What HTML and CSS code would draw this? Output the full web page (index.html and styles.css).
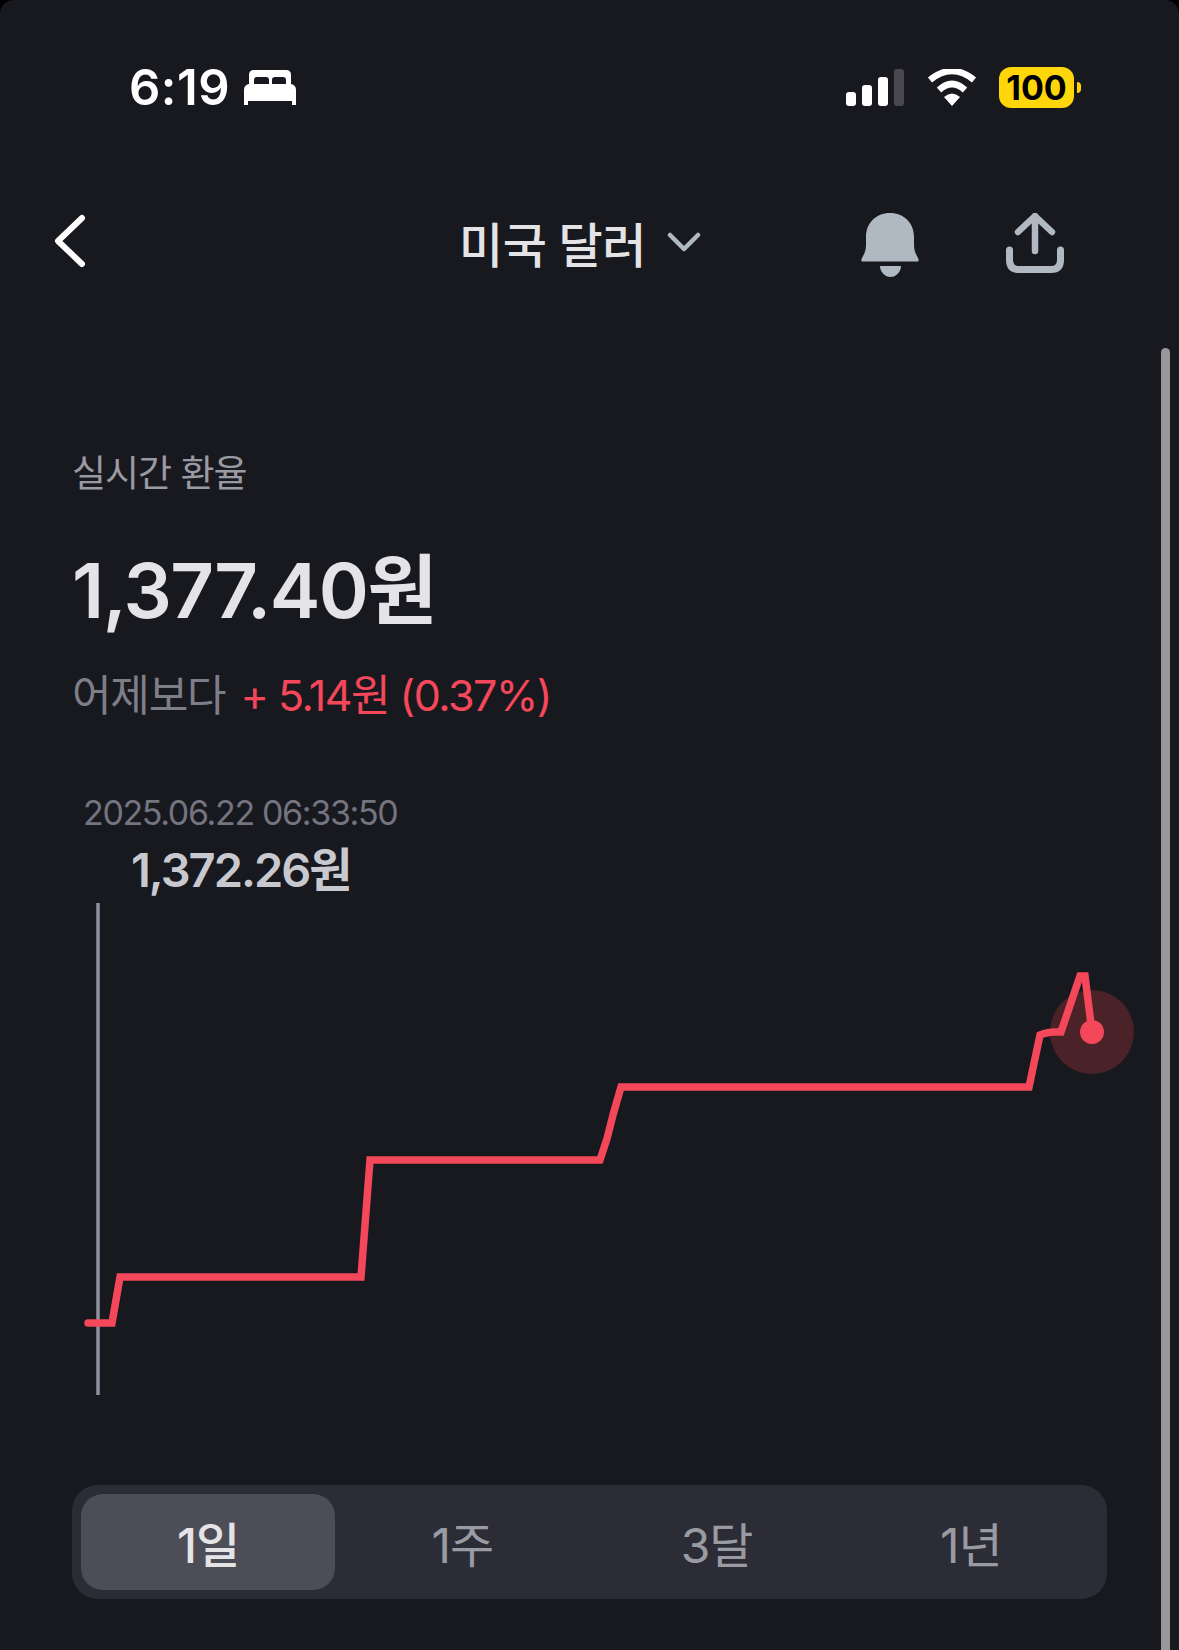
FILE: index.html
```html
<!DOCTYPE html>
<html lang="ko">
<head>
    <meta charset="UTF-8">
    <meta name="viewport" content="width=device-width, initial-scale=1.0">
    <title>미국 달러</title>
    <link rel="stylesheet" href="styles.css">
</head>
<body>
    <div class="screen">
        <div class="status-bar">
            <div class="status-left">
                <span class="clock">6:19</span>
                <svg class="bed-icon" width="52" height="35" viewBox="0 0 52 35">
                    <path fill-rule="evenodd" d="M5 5Q5 0 10 0H42Q47 0 47 5V14Q52 15 52 20V35H48V31H4V35H0V20Q0 15 5 14ZM10 14H25V10Q25 7 22 7H13Q10 7 10 10ZM28 14H42V10Q42 7 39 7H31Q28 7 28 10Z" fill="#fff"/>
                </svg>
            </div>
            <div class="status-right">
                <div class="signal">
                    <span class="bar bar-1"></span>
                    <span class="bar bar-2"></span>
                    <span class="bar bar-3"></span>
                    <span class="bar bar-4"></span>
                </div>
                <svg class="wifi-icon" width="50" height="37" viewBox="0 0 50 37">
                    <path d="M3 11Q25 -7 47 11" fill="none" stroke="#fff" stroke-width="6.5"/>
                    <path d="M12 21Q25 9 38 21" fill="none" stroke="#fff" stroke-width="6.5"/>
                    <path d="M25 37L17 28Q25 21 33 28Z" fill="#fff"/>
                </svg>
                <div class="battery">
                    <span class="battery-level">100</span>
                    <span class="battery-nub"></span>
                </div>
            </div>
        </div>

        <div class="nav-bar">
            <svg class="back-icon" width="32" height="54" viewBox="0 0 32 54">
                <path d="M28 4L4 27L28 50" fill="none" stroke="#fff" stroke-width="6" stroke-linecap="round" stroke-linejoin="round"/>
            </svg>
            <div class="nav-title">
                <span>미국 달러</span>
                <svg width="34" height="20" viewBox="0 0 34 20">
                    <path d="M3 3L17 17L31 3" fill="none" stroke="#b0b8c1" stroke-width="4.5" stroke-linecap="round" stroke-linejoin="round"/>
                </svg>
            </div>
            <div class="nav-actions">
                <svg class="bell-icon" width="58" height="64" viewBox="0 0 58 64">
                    <path d="M29 0C15 0 5 10 5 24V32C5 38 3 41 1 45C0 47 0 48.5 2 48.5H56C58 48.5 58 47 57 45C55 41 53 38 53 32V24C53 10 43 0 29 0Z" fill="#b0b8c1"/>
                    <path d="M19 53H40C40 59 35 64 29.5 64C24 64 19 59 19 53Z" fill="#b0b8c1"/>
                </svg>
                <svg width="58" height="60" viewBox="0 0 58 60">
                    <path d="M29 3V38M12 19L29 3L46 19" fill="none" stroke="#b0b8c1" stroke-width="6.5" stroke-linecap="round" stroke-linejoin="round"/>
                    <path d="M3.5 37V47Q3.5 56.5 13 56.5H45Q54.5 56.5 54.5 47V37" fill="none" stroke="#b0b8c1" stroke-width="7" stroke-linecap="round"/>
                </svg>
            </div>
        </div>

        <div class="rate-info">
            <div class="rate-label">실시간 환율</div>
            <div class="rate-price">1,377.40원</div>
            <div class="rate-change">
                <span class="change-label">어제보다</span>
                <span class="change-value">+ 5.14원 (0.37%)</span>
            </div>
        </div>

        <div class="chart">
            <div class="chart-date">2025.06.22 06:33:50</div>
            <div class="chart-value">1,372.26원</div>
            <svg class="chart-svg" width="1179" height="500" viewBox="0 900 1179 500">
                <line x1="98" y1="903" x2="98" y2="1395" stroke="#8f93a0" stroke-width="3.5"/>
                <circle cx="1092" cy="1032" r="42" fill="#4a2227"/>
                <path d="M88 1323H112L120 1277H361L370 1160H600Q608 1138 613 1115L621 1087H1029L1040 1035Q1048 1032 1054 1032H1061L1080 976H1085L1092 1032" fill="none" stroke="#f4485a" stroke-width="7.5" stroke-linecap="round" stroke-linejoin="miter" stroke-miterlimit="3"/>
                <circle cx="1092" cy="1032" r="12" fill="#f4485a"/>
            </svg>
        </div>

        <div class="period-tabs">
            <div class="period-tab active">1일</div>
            <div class="period-tab">1주</div>
            <div class="period-tab">3달</div>
            <div class="period-tab">1년</div>
        </div>

        <div class="scrollbar"></div>
    </div>
</body>
</html>
```

FILE: styles.css
```css
* {
    box-sizing: border-box;
}
html, body {
    margin: 0;
    background-color: #000;
}
.screen {
    position: relative;
    width: 1179px;
    height: 1650px;
    overflow: hidden;
    background-color: #18181f;
    border-radius: 14px 14px 0 0;
    font-family: Inter, "Noto Sans CJK KR", sans-serif;
}
.status-bar {
    display: flex;
    justify-content: space-between;
    align-items: center;
    height: 41px;
    margin-top: 67px;
    padding: 0 105px 0 129px;
}
.status-left {
    display: flex;
    align-items: center;
    gap: 14px;
}
.clock {
    color: #fff;
    font-size: 49px;
    font-weight: 600;
    letter-spacing: 0.5px;
    line-height: 41px;
}
.status-right {
    display: flex;
    align-items: center;
}
.signal {
    display: flex;
    align-items: flex-end;
    gap: 6px;
    height: 37px;
    margin-right: 23px;
}
.bar {
    width: 10px;
    border-radius: 3px;
    background-color: #fff;
}
.bar-1 { height: 14px; }
.bar-2 { height: 21px; }
.bar-3 { height: 29px; }
.bar-4 { height: 37px; background-color: #48484e; }
.wifi-icon {
    margin-right: 22px;
}
.battery {
    position: relative;
    width: 75px;
    height: 41px;
    border-radius: 12px;
    background-color: #ffd60a;
    color: #000;
    font-size: 34px;
    font-weight: 700;
    line-height: 41px;
    text-align: center;
}
.battery-nub {
    position: absolute;
    left: 78px;
    top: 15px;
    width: 4px;
    height: 11px;
    border-radius: 0 4px 4px 0;
    background-color: #ffd60a;
}
.nav-bar {
    position: relative;
    display: flex;
    align-items: center;
    justify-content: space-between;
    height: 66px;
    margin-top: 102px;
    padding: 0 115px 0 54px;
}
.back-icon {
    margin-top: -4px;
}
.nav-title {
    display: flex;
    align-items: center;
    gap: 21px;
    margin-left: 373px;
    margin-top: -2px;
    color: #e4e4e7;
    font-size: 48px;
    font-weight: 500;
    letter-spacing: -0.5px;
}
.nav-actions {
    display: flex;
    align-items: center;
    gap: 87px;
    margin-left: auto;
}
.bell-icon {
    margin-top: 4px;
}
.rate-info {
    padding: 0 0 0 72px;
    margin-top: 176px;
}
.rate-label {
    color: #9a9aa2;
    font-size: 37px;
    letter-spacing: -1px;
    line-height: 44px;
}
.rate-price {
    margin-top: 49px;
    color: #e4e4e7;
    font-size: 76px;
    font-weight: 600;
    letter-spacing: -1.5px;
    line-height: 90px;
}
.rate-change {
    display: flex;
    gap: 15px;
    margin-top: 34px;
    font-size: 43px;
    letter-spacing: -1.2px;
    line-height: 52px;
}
.change-label {
    color: #7d7e88;
}
.change-value {
    color: #f4485a;
    letter-spacing: -1.5px;
}
.chart {
    position: relative;
    height: 693px;
    margin-top: 71px;
}
.chart-date {
    margin-left: 83px;
    color: #73747f;
    font-size: 34px;
    letter-spacing: -1.35px;
    line-height: 42px;
}
.chart-value {
    margin-top: 8px;
    margin-left: 131px;
    color: #c8c9ce;
    font-size: 47px;
    font-weight: 600;
    letter-spacing: -2px;
    line-height: 56px;
}
.chart-svg {
    display: block;
    margin-top: 2px;
}
.period-tabs {
    display: flex;
    width: 1035px;
    height: 114px;
    margin-left: 72px;
    padding: 9px;
    border-radius: 26px;
    background-color: #2c2c36;
}
.period-tab {
    flex: 1;
    display: flex;
    align-items: center;
    justify-content: center;
    border-radius: 22px;
    color: #9a9aa2;
    font-size: 48px;
    letter-spacing: -1px;
}
.period-tab.active {
    background-color: #4d4d58;
    color: #e4e4e7;
    font-weight: 500;
}
.scrollbar {
    position: absolute;
    left: 1161px;
    top: 348px;
    bottom: 0;
    width: 9px;
    border-radius: 5px 5px 0 0;
    background-color: #98989c;
}
```
